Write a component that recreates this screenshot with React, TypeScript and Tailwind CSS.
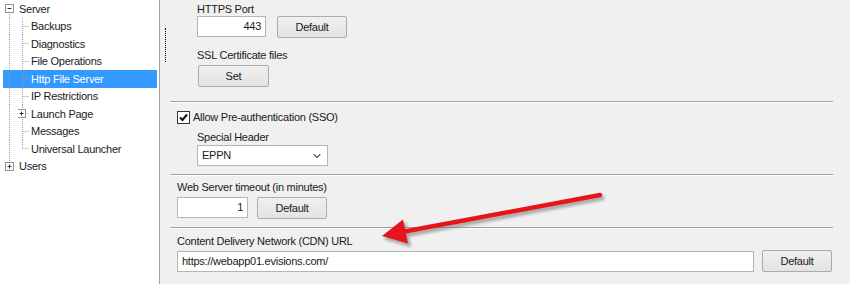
import { ChevronDown } from "lucide-react";

const font = { fontFamily: '"Liberation Sans", Arial, sans-serif' };

type Row = {
  label: string;
  kind: "root-open" | "root-closed" | "child" | "child-last" | "child-plus";
  selected?: boolean;
};

const rows: Row[] = [
  { label: "Server", kind: "root-open" },
  { label: "Backups", kind: "child" },
  { label: "Diagnostics", kind: "child" },
  { label: "File Operations", kind: "child" },
  { label: "Http File Server", kind: "child", selected: true },
  { label: "IP Restrictions", kind: "child" },
  { label: "Launch Page", kind: "child-plus" },
  { label: "Messages", kind: "child" },
  { label: "Universal Launcher", kind: "child-last" },
  { label: "Users", kind: "root-closed" },
];

const dot = { stroke: "#a0a0a0", strokeWidth: 1, strokeDasharray: "1 1" };

function ExpandBox({ x, open }: { x: number; open: boolean }) {
  return (
    <g>
      <rect x={x - 4} y={4.5} width={8} height={8} fill="#fff" stroke="#919191" />
      <line x1={x - 2} y1={8.5} x2={x + 2} y2={8.5} stroke="#333" />
      {!open && <line x1={x} y1={6.5} x2={x} y2={10.5} stroke="#333" />}
    </g>
  );
}

function TreeRow({ row }: { row: Row }) {
  const isRoot = row.kind === "root-open" || row.kind === "root-closed";
  return (
    <div
      className={`flex h-[17.5px] items-center ${row.selected ? "bg-[#3399ff] text-white" : "text-[#1a1a1a]"}`}
    >
      <svg width={15} height={17.5} className="shrink-0">
        {row.kind === "root-open" && (
          <>
            <line x1={6.5} y1={12.5} x2={6.5} y2={17.5} {...dot} />
            <ExpandBox x={6.5} open />
          </>
        )}
        {row.kind === "root-closed" && (
          <>
            <line x1={6.5} y1={0} x2={6.5} y2={4.5} {...dot} />
            <ExpandBox x={6.5} open={false} />
          </>
        )}
        {!isRoot && <line x1={6.5} y1={0} x2={6.5} y2={17.5} {...dot} />}
      </svg>
      {!isRoot && (
        <svg width={12} height={17.5} className="shrink-0">
          <line
            x1={4.5}
            y1={0}
            x2={4.5}
            y2={row.kind === "child-last" ? 8.5 : 17.5}
            {...dot}
          />
          <line x1={4.5} y1={8.5} x2={11} y2={8.5} {...dot} />
          {row.kind === "child-plus" && <ExpandBox x={3.5} open={false} />}
        </svg>
      )}
      <span className="whitespace-nowrap pl-[1px] text-[11px] leading-[14px]">{row.label}</span>
    </div>
  );
}

function Btn({ label, w }: { label: string; w: string }) {
  return (
    <div
      className={`${w} flex h-[22px] items-center justify-center rounded-[2px] border border-[#acacac] bg-gradient-to-b from-[#f0f0f0] to-[#e3e3e3] text-[11px] text-[#1a1a1a]`}
    >
      {label}
    </div>
  );
}

function Field({ value, w, right }: { value: string; w: string; right?: boolean }) {
  return (
    <div
      className={`${w} flex h-[21px] items-center border border-[#b5b5b5] bg-white px-[4px] text-[11px] text-[#1a1a1a] ${right ? "justify-end" : ""}`}
    >
      {value}
    </div>
  );
}

function Divider() {
  return (
    <div className="w-[663px]">
      <div className="h-px bg-[#a0a0a0]" />
      <div className="h-px bg-white" />
    </div>
  );
}

function Label({ text }: { text: string }) {
  return <div className="h-[14px] text-[11px] leading-[14px] text-[#1a1a1a]">{text}</div>;
}

export default function App() {
  return (
    <div
      className="relative flex h-[284px] w-[850px] overflow-hidden bg-[#f0f0f0] tracking-[-0.25px]"
      style={font}
    >
      {/* tree */}
      <div className="h-full w-[160px] shrink-0 border-r border-[#a0a0a0] bg-white pl-[3px] pr-[2px]">
        {rows.map((r) => (
          <TreeRow key={r.label} row={r} />
        ))}
      </div>

      {/* splitter */}
      <div className="w-[10px] shrink-0 pl-[5px] pt-[28px]">
        <div className="h-[34px] w-0 border-l border-dotted border-black" />
      </div>

      {/* settings */}
      <div className="flex flex-col">
        <div className="pl-[27px] pt-[2px]">
          <Label text="HTTPS Port" />
          <div className="flex items-start gap-[11px]">
            <Field value="443" w="w-[69px]" right />
            <Btn label="Default" w="w-[70px]" />
          </div>
          <div className="mt-[10px]">
            <Label text="SSL Certificate files" />
          </div>
          <div className="ml-[1px] mt-[3px]">
            <Btn label="Set" w="w-[71px]" />
          </div>
        </div>

        <div className="mt-[14px]">
          <Divider />
        </div>

        <div className="mt-[7px] flex h-[14px] items-center gap-[3px] pl-[7px]">
          <svg width={13} height={13} className="shrink-0">
            <rect x={0.5} y={0.5} width={12} height={12} fill="#fff" stroke="#333" />
            <path d="M3 6.5 L5.5 9 L10 3.5" fill="none" stroke="#111" strokeWidth={2} />
          </svg>
          <span className="text-[11px] text-[#1a1a1a]">Allow Pre-authentication (SSO)</span>
        </div>
        <div className="mt-[6px] pl-[27px]">
          <Label text="Special Header" />
          <div className="mt-[1px] flex h-[21px] w-[131px] items-center justify-between border border-[#b5b5b5] bg-white pl-[4px] pr-[4px] text-[11px] text-[#1a1a1a]">
            <span>EPPN</span>
            <ChevronDown size={12} strokeWidth={2.2} color="#555" />
          </div>
        </div>

        <div className="mt-[8px]">
          <Divider />
        </div>

        <div className="mt-[4px] pl-[7px]">
          <Label text="Web Server timeout (in minutes)" />
          <div className="mt-[3px] flex items-start gap-[9px]">
            <Field value="1" w="w-[71px]" right />
            <Btn label="Default" w="w-[70px]" />
          </div>
        </div>

        <div className="mt-[8px]">
          <Divider />
        </div>

        <div className="mt-[5px] pl-[7px]">
          <Label text="Content Delivery Network (CDN) URL" />
          <div className="mt-[2px] flex items-center gap-[8px]">
            <Field value="https://webapp01.evisions.com/" w="w-[577px]" />
            <Btn label="Default" w="w-[70px]" />
          </div>
        </div>
      </div>

      {/* red annotation arrow */}
      <svg className="pointer-events-none absolute left-0 top-0" width={850} height={284}>
        <defs>
          <filter id="sh" x="-20%" y="-50%" width="140%" height="200%">
            <feGaussianBlur stdDeviation="1.6" />
          </filter>
        </defs>
        <g transform="translate(2.5 3)" fill="#6a6a6a" stroke="#6a6a6a" opacity={0.55} filter="url(#sh)">
          <line x1={600} y1={195} x2={402} y2={232} strokeWidth={4.5} strokeLinecap="round" />
          <polygon points="382,236 403,219.5 408,243.5" />
        </g>
        <line x1={600} y1={195} x2={402} y2={232} stroke="#e8141b" strokeWidth={4.5} strokeLinecap="round" />
        <polygon points="382,236 403,219.5 408,243.5" fill="#e8141b" />
      </svg>
    </div>
  );
}
